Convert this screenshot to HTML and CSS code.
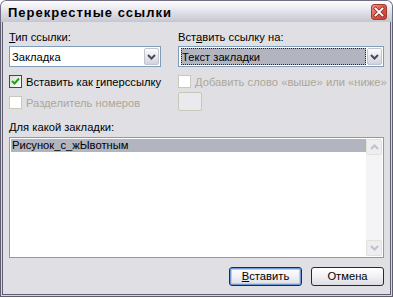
FILE: index.html
```html
<!DOCTYPE html>
<html lang="ru">
<head>
<meta charset="utf-8">
<title>Перекрестные ссылки</title>
<link rel="stylesheet" href="styles.css">
</head>
<body>
<div class="window">
  <div class="titlebar">
    <span class="title">Перекрестные ссылки</span>
    <span class="close">
      <svg width="16" height="16" viewBox="0 0 16 16">
        <path d="M4.5 4.5 L11.5 11.5 M11.5 4.5 L4.5 11.5" stroke="#7a2a22" stroke-width="3.2" stroke-linecap="square" fill="none"/>
        <path d="M4.5 4.5 L11.5 11.5 M11.5 4.5 L4.5 11.5" stroke="#ffffff" stroke-width="1.8" stroke-linecap="square" fill="none"/>
      </svg>
    </span>
  </div>
  <div class="body">
    <div class="top">
      <div class="col">
        <div class="label"><u>Т</u>ип ссылки:</div>
        <div class="combo">
          <span class="combo-text">Закладка</span>
          <span class="combo-btn"><svg width="9" height="6" viewBox="0 0 9 6"><path d="M1 1 L4.5 4.5 L8 1" stroke="#4a4a5a" stroke-width="2" fill="none"/></svg></span>
        </div>
        <div class="check">
          <span class="box on"><svg width="11" height="11" viewBox="0 0 11 11"><path d="M2 5 L4.5 7.5 L9 2.5" stroke="#21a121" stroke-width="2" fill="none"/></svg></span>
          <span>Вставить как <u>г</u>иперссылку</span>
        </div>
        <div class="check disabled">
          <span class="box"></span>
          <span>Разделитель номеров</span>
        </div>
      </div>
      <div class="col">
        <div class="label">Вст<u>а</u>вить ссылку на:</div>
        <div class="combo">
          <span class="combo-text"><span class="sel-text">Текст закладки</span></span>
          <span class="combo-btn"><svg width="9" height="6" viewBox="0 0 9 6"><path d="M1 1 L4.5 4.5 L8 1" stroke="#4a4a5a" stroke-width="2" fill="none"/></svg></span>
        </div>
        <div class="check disabled">
          <span class="box"></span>
          <span>Добавить слово «выше» или «ниже»</span>
        </div>
        <div class="dis-box"></div>
      </div>
    </div>
    <div class="label list-label"><u>Д</u>ля какой закладки:</div>
    <div class="listbox">
      <div class="items">
        <div class="item selected">Рисунок_с_жЫвотным</div>
      </div>
      <div class="scrollbar">
        <div class="sb-btn"><svg width="9" height="6" viewBox="0 0 9 6"><path d="M1 5 L4.5 1.5 L8 5" stroke="#c2c1c8" stroke-width="2" fill="none"/></svg></div>
        <div class="sb-track"></div>
        <div class="sb-btn"><svg width="9" height="6" viewBox="0 0 9 6"><path d="M1 1 L4.5 4.5 L8 1" stroke="#c2c1c8" stroke-width="2" fill="none"/></svg></div>
      </div>
    </div>
    <div class="buttons">
      <button class="btn default"><u>В</u>ставить</button>
      <button class="btn">Отмена</button>
    </div>
  </div>
</div>
</body>
</html>
```

FILE: styles.css
```css
html, body {
  margin: 0;
  padding: 0;
  background: #ffffff;
}
body {
  font-family: "Liberation Sans", Arial, sans-serif;
  font-size: 11.2px;
  color: #000;
}
.window {
  width: 393px;
  height: 297px;
  box-sizing: border-box;
  display: flex;
  flex-direction: column;
  background: #e0dfe3;
  border-radius: 6px 6px 0 0;
  overflow: hidden;
}
.titlebar {
  height: 22px;
  flex: none;
  box-sizing: border-box;
  display: flex;
  align-items: center;
  justify-content: space-between;
  padding: 0 5px 0 7px;
  background: linear-gradient(#fdfdfe 0%, #eeeef3 30%, #dcdce5 60%, #c6c6d3 100%);
  border: 1px solid #6f6e84;
  border-bottom: none;
  border-radius: 6px 6px 0 0;
}
.title {
  font-weight: bold;
  font-size: 13px;
  letter-spacing: 1px;
  color: #000;
  padding-top: 1px;
}
.close {
  width: 16px;
  height: 16px;
  box-sizing: border-box;
  border: 1px solid #a33a2e;
  border-radius: 3px;
  background: linear-gradient(135deg, #f09a8c 0%, #df5a4a 45%, #c63e30 100%);
  display: flex;
  align-items: center;
  justify-content: center;
}
.close svg {
  display: block;
  margin: -1px;
}
.body {
  flex: 1;
  display: flex;
  flex-direction: column;
  padding: 9px 6px 0 6px;
  border-left: 3px solid #5f5e70;
  border-right: 3px solid #5f5e70;
  border-bottom: 3px solid #5f5e70;
  position: relative;
}
.body::before {
  content: "";
  position: absolute;
  left: -2px;
  right: -2px;
  top: 0;
  bottom: -2px;
  border-left: 1px solid #d7d6de;
  border-right: 1px solid #d7d6de;
  border-bottom: 1px solid #d7d6de;
  pointer-events: none;
}
.top {
  display: grid;
  grid-template-columns: 152px 206px;
  column-gap: 17px;
}
.col {
  display: flex;
  flex-direction: column;
}
.label {
  line-height: 13px;
  height: 13px;
  white-space: nowrap;
}
.combo {
  margin-top: 2px;
  height: 21px;
  box-sizing: border-box;
  border: 1px solid #7f9db9;
  background: #fff;
  display: flex;
  align-items: stretch;
}
.combo-text {
  flex: 1;
  display: flex;
  align-items: center;
  padding: 1px 1px 1px 2px;
}
.sel-text {
  flex: 1;
  align-self: stretch;
  display: flex;
  align-items: center;
  background: #b2b4bf;
  outline: 1px dotted #222;
  outline-offset: -1px;
  padding-left: 1px;
}
.combo-btn {
  width: 15px;
  flex: none;
  margin: 1px 1px 1px 0;
  box-sizing: border-box;
  border: 1px solid #c3c3cf;
  border-radius: 2px;
  background: linear-gradient(#fbfbfd, #e4e4ec 60%, #d2d2de);
  display: flex;
  align-items: center;
  justify-content: center;
}
.check {
  display: flex;
  align-items: center;
  gap: 4px;
  height: 13px;
  margin-top: 8px;
  white-space: nowrap;
}
.box {
  width: 13px;
  height: 13px;
  box-sizing: border-box;
  border: 1px solid #1c5180;
  background: linear-gradient(135deg, #dcdcd7, #ffffff);
  flex: none;
  display: flex;
  align-items: center;
  justify-content: center;
}
.check.disabled {
  color: #aca899;
}
.check.disabled .box {
  border-color: #cac8bb;
  background: #ffffff;
}
.dis-box {
  margin-top: 4px;
  width: 24px;
  height: 19px;
  box-sizing: border-box;
  border: 1px solid #c9c7ba;
  border-radius: 2px;
  background: #eae9ee;
}
.list-label {
  margin-top: 10px;
}
.listbox {
  margin-top: 3px;
  height: 121px;
  box-sizing: border-box;
  border: 1px solid #7f9db9;
  background: #fff;
  display: flex;
  padding: 1px;
}
.items {
  flex: 1;
}
.item {
  height: 13px;
  line-height: 13px;
  padding-left: 1px;
}
.item.selected {
  background: #b2b4bf;
}
.scrollbar {
  width: 16px;
  flex: none;
  display: flex;
  flex-direction: column;
  background: #f4f4f6;
}
.sb-btn {
  height: 16px;
  box-sizing: border-box;
  border: 1px solid #e3e2da;
  border-radius: 2px;
  background: #eeeef0;
  display: flex;
  align-items: center;
  justify-content: center;
}
.sb-track {
  flex: 1;
}
.buttons {
  margin-top: 9px;
  display: flex;
  justify-content: flex-end;
  gap: 9px;
}
.btn {
  width: 73px;
  height: 19px;
  box-sizing: border-box;
  border: 1px solid #1d2a4d;
  border-radius: 3px;
  background: linear-gradient(#ffffff, #f1f1f4 50%, #dcdce4);
  font-family: "Liberation Sans", Arial, sans-serif;
  font-size: 11.2px;
  color: #000;
  padding: 0;
  line-height: 15px;
}
.btn.default {
  box-shadow: inset 0 0 0 1px #6e98d6, inset 0 0 0 2px #b7cdef;
}
```
